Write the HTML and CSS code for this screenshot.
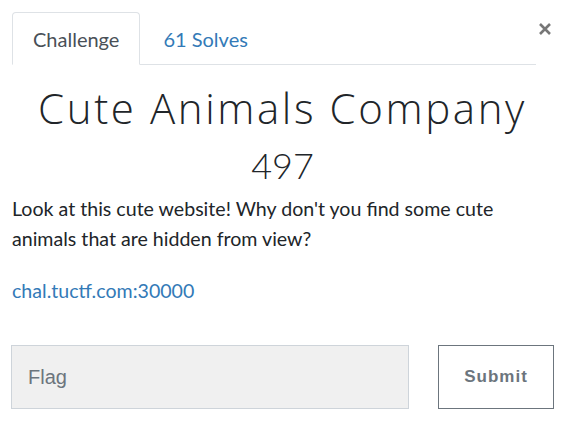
FILE: index.html
```html
<!DOCTYPE html>
<html>
<head>
<meta charset="utf-8">
<link rel="stylesheet" href="styles.css">
</head>
<body>
<div class="modal">
  <div class="top">
    <ul class="tabs">
      <li class="tab active">Challenge</li>
      <li class="tab link">61 Solves</li>
    </ul>
    <button class="close" aria-label="Close">
      <svg width="14" height="14" viewBox="0 0 14 14"><path d="M2 2 L12 12 M12 2 L2 12" stroke="#777" stroke-width="2.6" stroke-linecap="butt"/></svg>
    </button>
  </div>
  <h2 class="title">Cute Animals Company</h2>
  <div class="points">497</div>
  <p class="desc">Look at this cute website! Why don't you find some cute animals that are hidden from view?</p>
  <p class="url"><a href="#">chal.tuctf.com:30000</a></p>
  <form class="submit-row">
    <input class="flag" type="text" placeholder="Flag">
    <button class="btn" type="button">Submit</button>
  </form>
</div>
</body>
</html>
```
FILE: styles.css
```css
html, body {
  margin: 0;
  padding: 0;
  background: #fff;
}
body {
  font-family: Lato, "Open Sans", sans-serif;
  color: #212529;
}
.modal {
  padding: 12px 16px 0 11px;
}
.top {
  display: flex;
  align-items: flex-start;
}
.tabs {
  list-style: none;
  margin: 0 0 0 1px;
  padding: 0;
  display: flex;
  width: 524px;
  border-bottom: 1px solid #dee2e6;
}
.tab {
  font-size: 20px;
  line-height: 25px;
  padding: 14px 20px 12px 20px;
  border: 1px solid transparent;
  border-top-left-radius: 4px;
  border-top-right-radius: 4px;
  margin-bottom: -1px;
}
.tab.active {
  color: #495057;
  border-color: #dee2e6 #dee2e6 #fff;
  background: #fff;
}
.tab.link {
  color: #337ab7;
  padding-left: 22px;
}
.close {
  margin-left: auto;
  margin-top: 10px;
  margin-right: 2px;
  background: none;
  border: 0;
  padding: 0;
  width: 14px;
  height: 14px;
  display: block;
}
.close svg { display: block; }
.title {
  font-family: "Open Sans", sans-serif;
  font-weight: 300;
  font-size: 42px;
  letter-spacing: 2.6px;
  text-align: center;
  margin: 22px 0 0 0;
  line-height: 42px;
}
.points {
  text-align: center;
  font-size: 36px;
  font-weight: 300;
  line-height: 36px;
  margin-top: 18px;
}
.desc {
  font-size: 19.6px;
  line-height: 30px;
  margin: 11px 0 0 1px;
}
.url {
  font-size: 19.6px;
  line-height: 30px;
  margin: 22px 0 0 1px;
}
.url a {
  color: #337ab7;
  text-decoration: none;
}
.submit-row {
  display: flex;
  margin-top: 39px;
}
.flag {
  box-sizing: border-box;
  width: 398px;
  height: 64px;
  background: #f0f0f0;
  border: 1px solid #ced4da;
  padding: 0 16px;
  font-family: "Liberation Sans", Arial, sans-serif;
  font-size: 20px;
  color: #495057;
  margin: 0;
  outline: none;
}
.flag::placeholder {
  color: #6c757d;
}
.btn {
  box-sizing: border-box;
  margin-left: auto;
  width: 116px;
  height: 64px;
  background: #fff;
  border: 1px solid #6c757d;
  border-radius: 0;
  color: #6c757d;
  font-family: "Liberation Sans", Arial, sans-serif;
  font-weight: bold;
  font-size: 17px;
  letter-spacing: 1px;
}
```
